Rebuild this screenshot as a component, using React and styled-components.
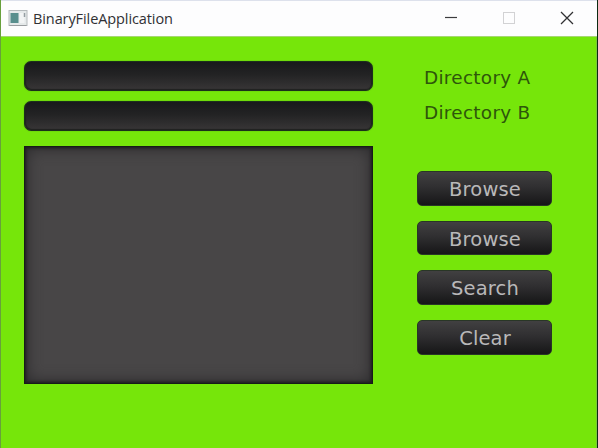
import React from 'react';
import styled, { createGlobalStyle } from 'styled-components';

const GlobalStyle = createGlobalStyle`
  * { box-sizing: border-box; }
  html, body { margin: 0; padding: 0; overflow: hidden; }
`;

const Window = styled.div`
  display: flex;
  flex-direction: column;
  width: 598px;
  height: 448px;
  background: #76e60a;
  border-left: 1px solid #68a03c;
  border-right: 1px solid #0b2a12;
`;

const TitleBar = styled.header`
  display: flex;
  align-items: center;
  flex: none;
  height: 37px;
  padding: 0 1px 2px 7px;
  background: #fdfdfe;
  border-top: 1px solid #dde1ec;
  border-bottom: 1px solid #a6d673;
`;

const Title = styled.h1`
  flex: 1;
  margin: 0 0 0 5px;
  font: 400 15.2px/20px 'Open Sans', 'Noto Sans', sans-serif;
  letter-spacing: -0.1px;
  color: #303034;
  white-space: nowrap;
  transform: scaleX(0.955);
  transform-origin: left center;
`;

const Controls = styled.div`
  display: flex;
  align-items: center;
`;

const Control = styled.button`
  display: flex;
  align-items: center;
  justify-content: center;
  width: 58px;
  height: 34px;
  padding: 0;
  border: 0;
  background: none;
`;

const Body = styled.main`
  display: flex;
  flex: 1;
  padding: 25px 0 0 23px;
  border-right: 1px solid #7cc83a;
`;

const Inputs = styled.section`
  display: flex;
  flex-direction: column;
  width: 349px;
  margin-top: -1px;
`;

const PathField = styled.div`
  height: 30px;
  margin-bottom: 10px;
  border: 1px solid #1b301b;
  border-radius: 7px;
  background: linear-gradient(#18191b, #232324 45%, #383637);
  box-shadow: inset 1px -1px 1px #202120, inset -1px 0 1px #202120, 0 0 1px #387712;
`;

const Results = styled.div`
  height: 238px;
  margin-top: 5px;
  border: 1px solid #171c18;
  background: #484647;
  box-shadow: inset 0 0 3px 1px #1d1c1e, inset 0 0 15px 1px #29282a;
`;

const Side = styled.aside`
  display: flex;
  flex-direction: column;
  width: 136px;
  margin-left: 44px;
`;

const Label = styled.div`
  height: 35px;
  padding-left: 7px;
  font: 400 18.4px/31px 'DejaVu Sans', sans-serif;
  letter-spacing: 0.3px;
  color: #2e560b;
  white-space: nowrap;
`;

const Actions = styled.div`
  display: flex;
  flex-direction: column;
  gap: 15px;
  margin-top: 39px;
`;

const Action = styled.button`
  width: 135px;
  height: 34.7px;
  padding: 2px 0 0 1px;
  border: 1px solid #293626;
  border-radius: 5px;
  background: linear-gradient(#414041, #302f31 45%, #161617);
  color: #b9b8b9;
  font: 400 19.5px/31px 'DejaVu Sans', sans-serif;
  letter-spacing: 0.15px;
`;

const AppIcon = () => (
  <svg width="20" height="18" viewBox="0 0 20 18">
    <rect x="1" y="1.5" width="18" height="15" fill="#e5e9ea" stroke="#b5babd" />
    <path d="M1.5 16.5h17" stroke="#999da0" />
    <rect x="2.5" y="4" width="8" height="10" fill="#598f8e" />
    <rect x="11.5" y="4" width="5" height="10" fill="#f2f4f5" />
    <path d="M16.5 4v4" stroke="#949da2" strokeWidth="1.5" />
  </svg>
);

const glyphs = {
  Minimize: <path d="M1 7.5h12" stroke="#3c3c3e" strokeWidth="1.2" />,
  Maximize: <rect x="1.5" y="2.5" width="11" height="11" fill="none" stroke="#d2d2d4" />,
  Close: <path d="M1 2l12 12M13 2L1 14" stroke="#303033" strokeWidth="1.25" fill="none" />,
};

export default function App() {
  return (
    <>
      <GlobalStyle />
      <Window>
        <TitleBar>
          <AppIcon />
          <Title>BinaryFileApplication</Title>
          <Controls>
            {Object.entries(glyphs).map(([name, glyph]) => (
              <Control key={name} aria-label={name}>
                <svg width="14" height="16" viewBox="0 0 14 16">{glyph}</svg>
              </Control>
            ))}
          </Controls>
        </TitleBar>
        <Body>
          <Inputs>
            <PathField />
            <PathField />
            <Results />
          </Inputs>
          <Side>
            <Label>Directory A</Label>
            <Label>Directory B</Label>
            <Actions>
              {['Browse', 'Browse', 'Search', 'Clear'].map((text, i) => (
                <Action key={i}>{text}</Action>
              ))}
            </Actions>
          </Side>
        </Body>
      </Window>
    </>
  );
}
